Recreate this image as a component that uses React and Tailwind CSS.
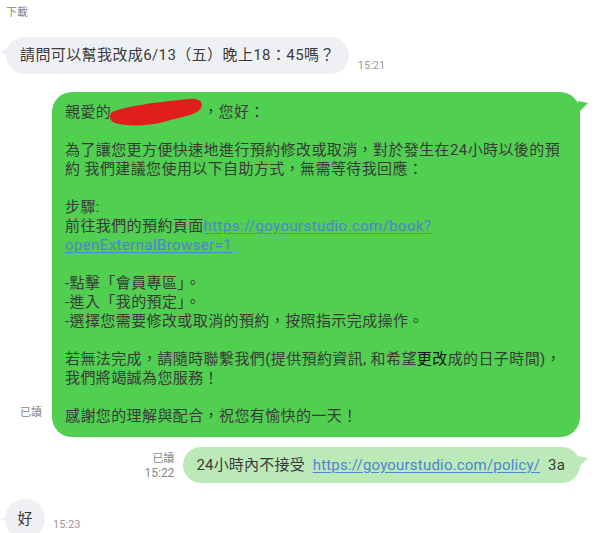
import React from "react";

const font = { fontFamily: 'Roboto, "Noto Sans CJK TC", sans-serif' };

const Link = ({ children }) => (
  <span className="text-[#4f82d6] underline underline-offset-2">{children}</span>
);

const Redacted = () => (
  <span className="relative inline-block w-[92px] h-[19px] align-top">
    <svg
      className="absolute left-[-2px] top-[-7px]"
      width="96"
      height="32"
      viewBox="0 0 96 32"
    >
      <path
        d="M3 16 C 18 10, 48 6, 80 3 C 90 2, 95 6, 92 12 C 88 19, 72 21, 58 25 C 42 30, 18 31, 6 27 C 0 25, 0 19, 3 16 Z"
        fill="#e21d1d"
      />
    </svg>
  </span>
);

const Blank = () => <div className="h-[19px]" />;

export default function App() {
  return (
    <div
      className="w-[595px] h-[533px] overflow-hidden bg-white text-[#3a3a3a] pr-[15px]"
      style={font}
    >
      <div className="pl-[6px] pt-[6px] text-[11px] leading-[14px] text-[#888]">下載</div>

      {/* incoming */}
      <div className="flex items-end gap-[9px] pl-[6px] mt-[17px]">
        <div className="relative h-[37px] flex items-center rounded-full bg-[#eff0f3] px-[14px] text-[15px] tracking-[0.4px]">
          <svg className="absolute left-[-6px] top-[7px]" width="12" height="12" viewBox="0 0 12 12">
            <path d="M12 0 L0 9 L12 12 Z" fill="#eff0f3" />
          </svg>
          請問可以幫我改成6/13（五）晚上18：45嗎？
        </div>
        <div className="text-[11px] leading-[14px] text-[#999] mb-[1px]">15:21</div>
      </div>

      {/* long outgoing */}
      <div className="flex justify-end items-end gap-[10px] mt-[18px]">
        <div className="text-[11px] leading-[14px] text-[#888] mb-[17px]">已讀</div>
        <div className="relative w-[528px] rounded-[20px] bg-[#50cf50] px-[13px] py-[11px] text-[15px] leading-[19px] tracking-[0.4px] whitespace-nowrap">
          <svg className="absolute right-[-8px] top-[9px]" width="10" height="12" viewBox="0 0 10 12">
            <path d="M0 0 L10 2 L0 12 Z" fill="#50cf50" />
          </svg>
          <div>
            親愛的<Redacted />，您好：
          </div>
          <Blank />
          <div>為了讓您更方便快速地進行預約修改或取消，對於發生在24小時以後的預</div>
          <div>約 我們建議您使用以下自助方式，無需等待我回應：</div>
          <Blank />
          <div>步驟:</div>
          <div>
            前往我們的預約頁面<Link>https://goyourstudio.com/book?</Link>
          </div>
          <div>
            <Link>openExternalBrowser=1</Link>
          </div>
          <Blank />
          <div>-點擊「會員專區」。</div>
          <div>-進入「我的預定」。</div>
          <div>-選擇您需要修改或取消的預約，按照指示完成操作。</div>
          <Blank />
          <div>
            若無法完成，請隨時聯繫我們(提供預約資訊, 和希望<span className="text-[#111]">更改</span>成的日子時間)，
          </div>
          <div>我們將竭誠為您服務！</div>
          <Blank />
          <div>感謝您的理解與配合，祝您有愉快的一天！</div>
        </div>
      </div>

      {/* short outgoing */}
      <div className="flex justify-end items-end gap-[9px] mt-[10px]">
        <div className="flex flex-col items-end text-[11px] leading-[15px] text-[#888] mb-[2px]">
          <span>已讀</span>
          <span className="text-[12px]">15:22</span>
        </div>
        <div className="relative h-[36px] flex items-center rounded-full bg-[#bbeab8] pl-[13px] pr-[15px] text-[15px] tracking-[0.2px] whitespace-pre">
          <svg className="absolute right-[-8px] top-[9px]" width="10" height="12" viewBox="0 0 10 12">
            <path d="M0 0 L10 2 L0 12 Z" fill="#bbeab8" />
          </svg>
          {"24小時內不接受  "}
          <Link>https://goyourstudio.com/policy/</Link>
          {"  3a"}
        </div>
      </div>

      {/* incoming short */}
      <div className="flex items-start gap-[8px] pl-[5px] mt-[16px]">
        <div className="relative w-[40px] h-[40px] shrink-0 flex items-center justify-center rounded-full bg-[#eff0f3] text-[15px]">
          <svg className="absolute left-[-5px] top-[12px]" width="12" height="12" viewBox="0 0 12 12">
            <path d="M12 0 L0 9 L12 12 Z" fill="#eff0f3" />
          </svg>
          好
        </div>
        <div className="mt-[20px] text-[11px] leading-[12px] text-[#999]">15:23</div>
      </div>
    </div>
  );
}
